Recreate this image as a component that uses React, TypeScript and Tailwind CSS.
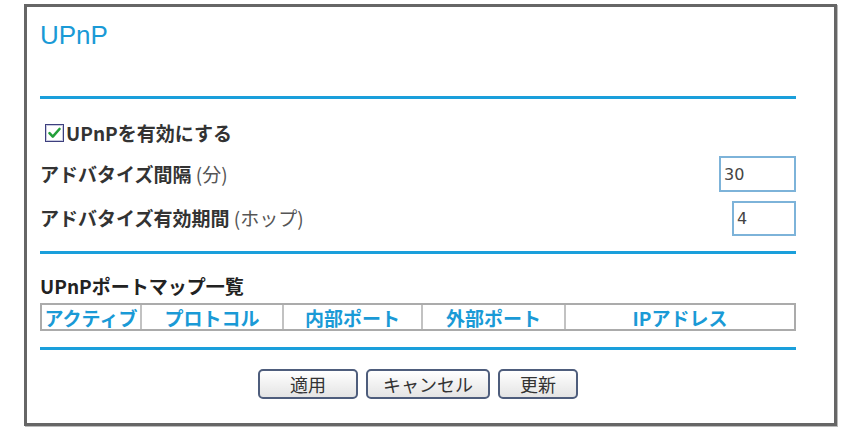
import React from 'react';

const jp = { fontFamily: '"Noto Sans CJK JP", "Liberation Sans", sans-serif' };

const columns = [
  { label: 'アクティブ', width: 'w-[98px]' },
  { label: 'プロトコル', width: 'w-[142px]' },
  { label: '内部ポート', width: 'w-[139px]' },
  { label: '外部ポート', width: 'w-[143px]' },
  { label: 'IPアドレス', width: 'flex-1' },
];

const Divider: React.FC<{ className?: string }> = ({ className = '' }) => (
  <div className={`h-[3px] w-full bg-[#1a9fdb] ${className}`} />
);

const CheckBox: React.FC = () => (
  <svg width="19" height="18" viewBox="0 0 19 18" className="shrink-0">
    <rect x="0.5" y="0.5" width="18" height="17" fill="#fff" stroke="#3d3f7e" />
    <rect x="1.5" y="1.5" width="16" height="15" fill="none" stroke="#c9cbe0" />
    <path d="M4.5 9.2 L7.8 12.6 L14.5 5" fill="none" stroke="#23a03a" strokeWidth="2.6" strokeLinecap="round" strokeLinejoin="round" />
  </svg>
);

const Button: React.FC<{ label: string; width: string }> = ({ label, width }) => (
  <button
    className={`${width} h-[30px] rounded-[5px] border-2 border-[#4e5d7c] bg-gradient-to-b from-white to-[#e4e4e4] text-[18px] text-[#333]`}
    style={jp}
  >
    {label}
  </button>
);

export default function App() {
  return (
    <div className="min-h-[427px] bg-white pl-[24px] pt-[4px]">
      <div className="flex h-[422px] w-[813px] flex-col border-[3px] border-[#666] pl-[13px] pr-[38px] shadow-[1px_1px_0_#bbb]">
        <h1
          className="mt-[15px] text-[26px] leading-none text-[#1a9ad6]"
          style={{ fontFamily: '"Liberation Sans", Arial, sans-serif' }}
        >
          UPnP
        </h1>

        <Divider className="mt-[48px]" />

        <label className="mt-[24px] flex h-[20px] items-center gap-[2px] pl-[5px]">
          <CheckBox />
          <span className="text-[19px] font-bold text-[#333]" style={jp}>
            UPnPを有効にする
          </span>
        </label>

        <div className="mt-[13px] flex h-[36px] items-center justify-between">
          <span className="text-[19px] font-bold text-[#333]" style={jp}>
            アドバタイズ間隔 <span className="font-normal text-[#555]">(分)</span>
          </span>
          <input
            readOnly
            value="30"
            className="h-[36px] w-[77px] border-2 border-[#7db3d9] px-[3px] text-[16px] text-[#444] outline-none"
            style={{ fontFamily: '"DejaVu Sans", sans-serif' }}
          />
        </div>

        <div className="mt-[9px] flex h-[35px] items-center justify-between">
          <span className="text-[19px] font-bold text-[#333]" style={jp}>
            アドバタイズ有効期間 <span className="font-normal text-[#555]">(ホップ)</span>
          </span>
          <input
            readOnly
            value="4"
            className="h-[35px] w-[64px] border-2 border-[#7db3d9] px-[3px] text-[16px] text-[#444] outline-none"
            style={{ fontFamily: '"DejaVu Sans", sans-serif' }}
          />
        </div>

        <Divider className="mt-[15px]" />

        <div className="mt-[22px] flex h-[20px] items-center">
          <span className="text-[19px] font-bold text-[#222]" style={jp}>
            UPnPポートマップ一覧
          </span>
        </div>

        <div className="mt-[7px] flex h-[28px] border-2 border-[#ababab] bg-white">
          {columns.map((col, i) => (
            <div
              key={col.label}
              className={`${col.width} flex items-center justify-center ${i > 0 ? 'border-l-2 border-[#c2c2c2]' : ''} text-[19px] font-bold leading-none text-[#1a9ad6]`}
              style={jp}
            >
              {col.label}
            </div>
          ))}
        </div>

        <Divider className="mt-[16px]" />

        <div className="mt-[19px] flex justify-center gap-[8px]">
          <Button label="適用" width="w-[100px]" />
          <Button label="キャンセル" width="w-[124px]" />
          <Button label="更新" width="w-[80px]" />
        </div>
      </div>
    </div>
  );
}
